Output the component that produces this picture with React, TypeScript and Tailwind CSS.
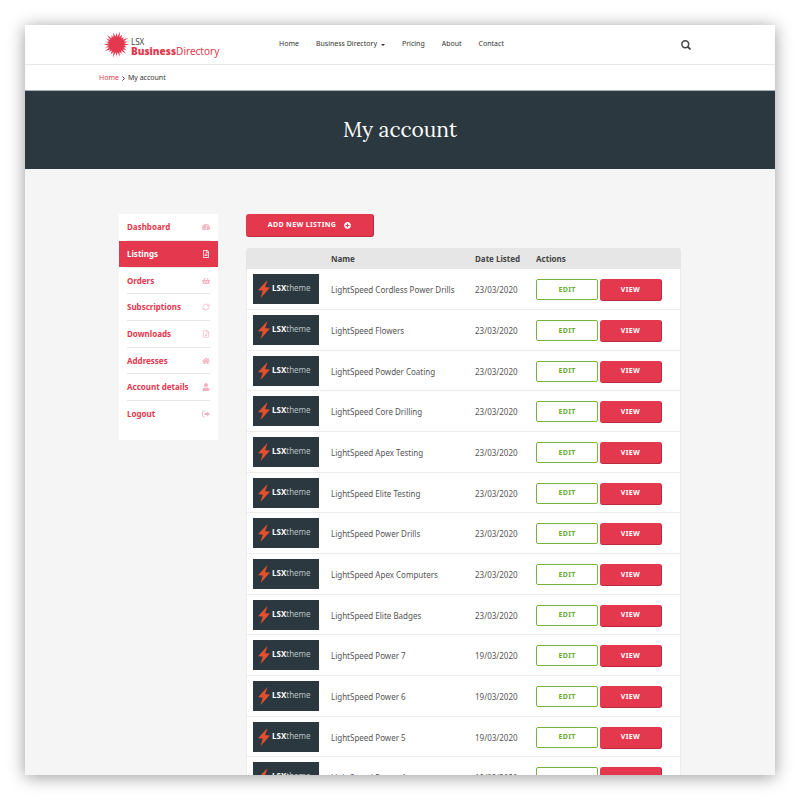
import type { ComponentType } from "react";
import {
  FaHome,
  FaPlusCircle,
  FaRegFileAlt,
  FaShoppingBasket,
  FaTachometerAlt,
  FaUser,
} from "react-icons/fa";
import { LuFileDown, LuRefreshCw } from "react-icons/lu";

type IconType = ComponentType<{ className?: string }>;

function SignOut({ className }: { className?: string }) {
  return (
    <svg viewBox="0 0 16 16" className={className} fill="currentColor" aria-hidden="true">
      <path d="M6 2H3a2 2 0 0 0-2 2v8a2 2 0 0 0 2 2h3" fill="none" stroke="currentColor" strokeWidth="1.5" />
      <path d="M10 3l6 5-6 5v-3H5V6h5z" />
    </svg>
  );
}

const menu: { label: string; icon: IconType; active?: boolean }[] = [
  { label: "Dashboard", icon: FaTachometerAlt },
  { label: "Listings", icon: FaRegFileAlt, active: true },
  { label: "Orders", icon: FaShoppingBasket },
  { label: "Subscriptions", icon: LuRefreshCw },
  { label: "Downloads", icon: LuFileDown },
  { label: "Addresses", icon: FaHome },
  { label: "Account details", icon: FaUser },
  { label: "Logout", icon: SignOut },
];

const listings = [
  ["LightSpeed Cordless Power Drills", "23/03/2020"],
  ["LightSpeed Flowers", "23/03/2020"],
  ["LightSpeed Powder Coating", "23/03/2020"],
  ["LightSpeed Core Drilling", "23/03/2020"],
  ["LightSpeed Apex Testing", "23/03/2020"],
  ["LightSpeed Elite Testing", "23/03/2020"],
  ["LightSpeed Power Drills", "23/03/2020"],
  ["LightSpeed Apex Computers", "23/03/2020"],
  ["LightSpeed Elite Badges", "23/03/2020"],
  ["LightSpeed Power 7", "19/03/2020"],
  ["LightSpeed Power 6", "19/03/2020"],
  ["LightSpeed Power 5", "19/03/2020"],
  ["LightSpeed Power 4", "19/03/2020"],
];

const spikeLengths = [13, 11, 12, 14, 11, 13, 12, 14, 12, 11, 14, 12];

function Burst() {
  const count = 24;
  const points = Array.from({ length: count * 2 }, (_, i) => {
    const a = (i / (count * 2)) * Math.PI * 2;
    const r = i % 2 ? 8 : spikeLengths[(i / 2) % spikeLengths.length];
    return `${14 + Math.cos(a) * r},${14 + Math.sin(a) * r}`;
  }).join(" ");
  return (
    <svg viewBox="0 0 28 28" className="size-[27px] shrink-0" fill="#e3384e" aria-hidden="true">
      <polygon points={points} />
    </svg>
  );
}

function Header() {
  return (
    <header className="border-b border-[#e8e8e8] bg-white">
      <div className="mx-auto flex h-[39px] max-w-[602px] items-center pr-[10px] pl-1">
        <a href="#" className="flex w-[176px] items-center gap-px text-[10px]">
          <Burst />
          <span className="flex flex-col pt-1">
            <span className="text-[8px] leading-[9px] text-[#444]">LSX</span>
            <span className="leading-[11px] text-[#e3384e]">
              <b className="font-black">Business</b>
              <span>Directory</span>
            </span>
          </span>
        </a>
        <nav className="flex flex-1 items-center gap-[17px] text-[7px] text-[#333]">
          <a href="#">Home</a>
          <a href="#" className="flex items-center gap-1">
            Business Directory
            <span className="border-x-2 border-t-2 border-x-transparent border-t-[#333]" />
          </a>
          <a href="#">Pricing</a>
          <a href="#">About</a>
          <a href="#">Contact</a>
        </nav>
        <button type="button" aria-label="Search" className="text-[#444]">
          <svg viewBox="0 0 20 20" className="size-[10px]" fill="none" stroke="currentColor" strokeWidth="3">
            <circle cx="8.5" cy="8.5" r="6.8" />
            <path d="M13.5 13.5L19 19" strokeWidth="3.6" />
          </svg>
        </button>
      </div>
    </header>
  );
}

function Sidebar() {
  return (
    <nav className="w-[99px] shrink-0 bg-white pb-3">
      <ul>
        {menu.map(({ label, icon: Icon, active }) => (
          <li
            key={label}
            className={`group flex h-[27px] flex-col nth-[3n]:h-[26px] ${active ? "text-white" : "text-[#e3384e]"}`}
          >
            <a
              href="#"
              className={`flex flex-1 items-center justify-between px-2 text-[8px] font-bold ${active ? "bg-[#e3384e]" : ""}`}
            >
              {label}
              <Icon className={`size-2 ${active ? "" : "text-[#f4b3bf]"}`} />
            </a>
            <span className="mx-2 h-px bg-[#e6e6e6] group-last:bg-white" />
          </li>
        ))}
      </ul>
    </nav>
  );
}

function Thumbnail() {
  return (
    <div className="flex h-[30px] w-[66px] items-center bg-[#2b3840] pl-[5px] text-[8px] leading-[10px] text-white">
      <svg viewBox="0 0 12 18" className="mr-[2px] h-[18px] w-3" fill="#e4502e" aria-hidden="true">
        <path d="M9.5 0L0 10.2l4.8.4L2.6 18 12 7.6l-4.9-.4z" />
      </svg>
      <span className="pb-[2px]">
        <b>LSX</b>
        <span className="text-[#b9c0c4]">theme</span>
      </span>
    </div>
  );
}

function Listings() {
  return (
    <table className="w-full table-fixed border-separate border-spacing-0 text-left text-[8px] text-[#555]">
      <thead>
        <tr className="h-[21px] bg-[#e6e6e6] text-[#444]">
          <th className="w-[78px] rounded-tl-[3px]" aria-label="Image" />
          <th className="w-36 pl-[7px]">Name</th>
          <th className="w-[61px] pl-[7px]">Date Listed</th>
          <th className="rounded-tr-[3px] pl-[7px]">Actions</th>
        </tr>
      </thead>
      <tbody className="bg-white [&_td]:border-b [&_td]:border-[#ececec]">
        {listings.map(([name, date]) => (
          <tr key={name} className="h-[41px] nth-[3n]:h-10">
            <td className="border-l pl-[6px]">
              <Thumbnail />
            </td>
            <td className="pt-[2px] pl-[7px]">{name}</td>
            <td className="pt-[2px] pl-[7px]">{date}</td>
            <td className="border-r pt-[2px] pl-[7px]">
              <div className="flex gap-[2px] text-[7px] font-bold tracking-wider">
                <button type="button" className="h-[21px] w-[62px] rounded-[2px] border border-[#76b43f] pt-px text-[#6bab33]">
                  EDIT
                </button>
                <button
                  type="button"
                  className="h-[22px] w-[62px] rounded-[3px] border-r border-b border-[#b92b3e] bg-[#e3384e] pt-px text-white"
                >
                  VIEW
                </button>
              </div>
            </td>
          </tr>
        ))}
      </tbody>
    </table>
  );
}

export default function App() {
  return (
    <div className="h-screen bg-white p-[25px] font-['Noto_Sans',sans-serif]">
      <div className="h-full overflow-hidden bg-[#f5f5f5] shadow-[0_2px_16px_rgba(0,0,0,0.4)]">
        <Header />
        <div className="border-b border-[#a9b3b3] bg-white">
          <div className="mx-auto flex h-[25px] max-w-[602px] items-center gap-[3px] pt-[2px] text-[7px] text-[#333]">
            <a href="#" className="text-[#e3384e]">
              Home
            </a>
            <svg viewBox="0 0 3 5" className="h-[5px] w-[3px]" fill="none" stroke="currentColor" aria-hidden="true">
              <path d="M0.5 0.5L2.5 2.5L0.5 4.5" />
            </svg>
            <span>My account</span>
          </div>
        </div>
        <div className="flex h-[78px] items-center justify-center bg-[#2b3840]">
          <h1 className="font-['Lora','Liberation_Serif',serif] text-[21px] text-white">My account</h1>
        </div>
        <main className="mx-auto flex max-w-[562px] items-start gap-7 pt-[45px]">
          <Sidebar />
          <div className="min-w-0 flex-1">
            <button
              type="button"
              className="mb-[11px] flex h-[23px] w-32 items-center justify-center gap-2 rounded-[3px] border-r border-b border-[#b92b3e] bg-[#e3384e] text-[7px] font-bold tracking-wider text-white"
            >
              ADD NEW LISTING
              <FaPlusCircle className="size-[7px]" />
            </button>
            <Listings />
          </div>
        </main>
      </div>
    </div>
  );
}
